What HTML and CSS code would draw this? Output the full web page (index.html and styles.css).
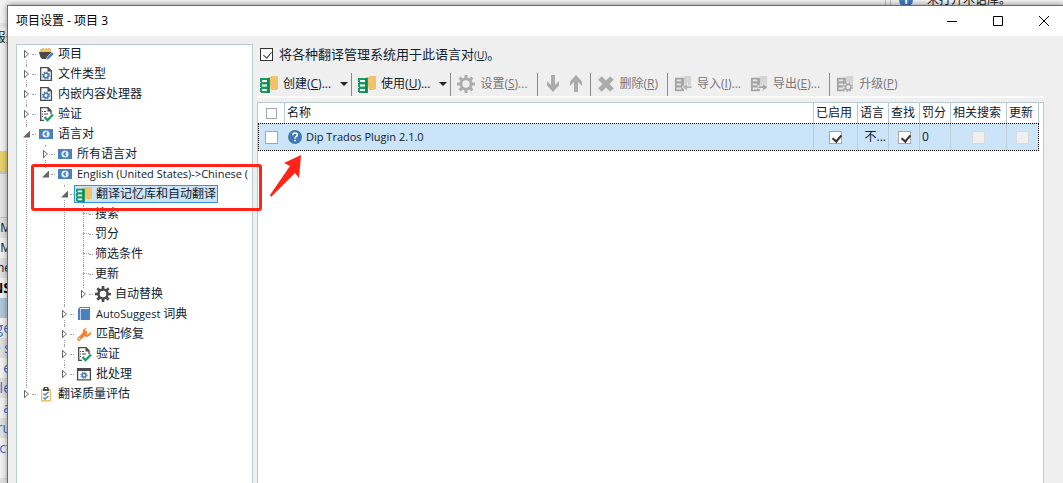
FILE: index.html
```html
<!DOCTYPE html>
<html lang="zh-CN">
<head>
    <meta charset="UTF-8">
    <meta name="viewport" content="width=device-width, initial-scale=1.0">
    <title>项目设置 - 项目 3</title>
    <link rel="stylesheet" href="styles.css">
</head>
<body>
    <svg class="sprite" aria-hidden="true">
        <symbol id="i-project" viewBox="0 0 16 16">
            <path d="M2 6V3h2V2h2v1h1V2h2v1h1V2h2v1h1v3z" fill="#f0c36a"/>
            <path d="M1 6h13l-1 4-3 3H5c-2 0-3-2-4-7z" fill="#4a4a4a"/>
            <path d="M8 14l1-3 5-5 2 2-5 5z" fill="#4a80bd" stroke="#fff" stroke-width=".6"/>
        </symbol>
        <symbol id="i-filetype" viewBox="0 0 16 16">
            <path d="M2.700 1.700h7.500l3.200 3v9.700H2.700z" fill="#fff" stroke="#4a4a4a" stroke-width="1.300"/>
            <path d="M9.500 1.500v4h4z" fill="#4a4a4a"/>
            <circle cx="8" cy="9.500" r="2.300" fill="none" stroke="#4a80bd" stroke-width="1.700"/>
            <circle cx="8" cy="9.500" r="3.500" fill="none" stroke="#4a80bd" stroke-width="1.200" stroke-dasharray="1.400 1.350"/>
        </symbol>
        <symbol id="i-verify" viewBox="0 0 16 16">
            <path d="M6 14.300H2.700V1.700h7.500l2.800 3V8" fill="#fff" stroke="#4a4a4a" stroke-width="1.300"/>
            <path d="M9.500 1.500v4h4z" fill="#4a4a4a"/>
            <path d="M4 5.500h1m1 0h2M4 8h1m1 0h4M4 10.500h1" stroke="#4a4a4a"/>
            <path d="M6.500 11l3 3.200L15 8.500" fill="none" stroke="#159a5f" stroke-width="2.200"/>
        </symbol>
        <symbol id="i-lang" viewBox="0 0 16 16">
            <path d="M1 3h14v10H1z" fill="#4a80bd"/>
            <circle cx="8" cy="8" r="3.600" fill="#e6f0fa"/>
            <path d="M8.800 5.800L6.700 8l2.100 2.200M7 8h2" fill="none" stroke="#4a80bd" stroke-width="1.200"/>
        </symbol>
        <symbol id="i-memory" viewBox="0 0 18 18">
            <path d="M8 2h3V1h7v13h-1v1h-6z" fill="#f0c36a"/>
            <path d="M0 3h10v15H1v-1H0v-4h1v-1H0V8h1V7H0z" fill="#159a5f"/>
            <path d="M2 5h5v2H2zM2 9.500h5v2H2zM2 14h5v2H2z" fill="#fff"/>
            <path d="M8 3v15" stroke="#0d7c4a"/>
        </symbol>
        <symbol id="i-gear" viewBox="0 0 18 18">
            <circle cx="9" cy="9" r="5.100" fill="none" stroke="currentColor" stroke-width="2.800"/>
            <path d="M9 0v4M9 14v4M0 9h4M14 9h4M2.600 2.600l3 3M12.400 12.400l3 3M15.400 2.600l-3 3M5.600 12.400l-3 3" stroke="currentColor" stroke-width="3"/>
        </symbol>
        <symbol id="i-book" viewBox="0 0 16 16">
            <path d="M2 3l2-2h10v13H2z" fill="#4a80bd"/>
            <path d="M4 2.500h9" stroke="#fff"/>
            <path d="M4.500 3v11" stroke="#b9d0e8"/>
        </symbol>
        <symbol id="i-wrench" viewBox="0 0 16 16">
            <path d="M3 13l6.500-6.500" stroke="#f0832e" stroke-width="3.600" stroke-linecap="round"/>
            <path d="M11.500 1.500L9 4v3l2.500 1.500 3.500-3-.5 3.500-3.500 2-3.500-1-1-3 1-4z" fill="#f0832e"/>
            <circle cx="3.500" cy="12.500" r=".8" fill="#fff"/>
        </symbol>
        <symbol id="i-batch" viewBox="0 0 16 16">
            <path d="M1.600 2.600h12.800v11.200H1.600z" fill="#fff" stroke="#4a4a4a" stroke-width="1.300"/>
            <path d="M1 2h14v3H1z" fill="#4a4a4a"/>
            <circle cx="8" cy="9.200" r="1.900" fill="none" stroke="#4a80bd" stroke-width="1.700"/>
            <circle cx="8" cy="9.200" r="3.200" fill="none" stroke="#4a80bd" stroke-dasharray="1.300 1.213"/>
        </symbol>
        <symbol id="i-quality" viewBox="0 0 16 16">
            <path d="M3.700 3.700h8.800v11H3.700z" fill="#fff" stroke="#f0c36a" stroke-width="1.400"/>
            <path d="M5 5V3l1-2h4l1 2v2z" fill="#4a4a4a"/>
            <path d="M7 2.500h2" stroke="#fff"/>
            <path d="M5.500 7.500L7 9l3.500-3M5.500 11.500L7 13l3.500-3" fill="none" stroke="#4a80bd" stroke-width="1.400"/>
        </symbol>
        <symbol id="i-help" viewBox="0 0 14 14">
            <circle cx="7" cy="7" r="7" fill="#4178b5"/>
            <path d="M4.700 5.200c0-3 4.600-2.800 4.600-.2 0 1.700-2.300 1.700-2.300 3.500" fill="none" stroke="#fff" stroke-width="1.600"/>
            <path d="M6.200 9.700h1.700v1.600H6.200z" fill="#fff"/>
        </symbol>
        <symbol id="i-down" viewBox="0 0 14 18">
            <path d="M5 0h4v10l4-4v4.500L7 17 1 10.500V6l4 4z" fill="#ababab"/>
        </symbol>
        <symbol id="i-up" viewBox="0 0 14 18">
            <path d="M5 17h4V7l4 4V6.500L7 0 1 6.500V11l4-4z" fill="#ababab"/>
        </symbol>
        <symbol id="i-delete" viewBox="0 0 18 18">
            <path d="M3 3l12 12M15 3L3 15" stroke="#ababab" stroke-width="5"/>
        </symbol>
        <symbol id="i-stack" viewBox="0 0 20 18">
            <path d="M8 2h3V0h8v12h-8z" fill="#d4d4d4"/>
            <path d="M1 2h10v15H1z" fill="#a4a4a4"/>
            <path d="M3 4h5v2H3zM3 8.500h5v2H3zM3 13h5v2H3z" fill="#e6e6e6"/>
        </symbol>
    </svg>

    <div class="backdrop" aria-hidden="true">
        <div class="backdrop-top"><i class="pane-split"></i><i class="info-dot">i</i><span>未打开术语库。</span></div>
        <div class="backdrop-side">
            <div class="side-line head"></div>
            <div class="side-line menu"><span>服务</span></div>
            <div class="side-line yellow"></div>
            <div class="side-line pane"></div>
            <div class="side-line odd"><span>BM</span></div>
            <div class="side-line"><span>M</span></div>
            <div class="side-line odd"><span>he</span></div>
            <div class="side-line strong"><span>NS</span></div>
            <div class="side-line active"></div>
            <div class="side-line link"><span>ge</span></div>
            <div class="side-line link odd"><span>e s</span></div>
            <div class="side-line link"><span>e</span></div>
            <div class="side-line link odd"><span>le</span></div>
            <div class="side-line link"><span>a</span></div>
            <div class="side-line link odd"><span>ru</span></div>
            <div class="side-line link"><span>ct</span></div>
            <div class="side-line"></div>
            <div class="side-line odd"></div>
        </div>
    </div>

    <div class="dialog" role="dialog" aria-labelledby="dialog-title">
        <header class="titlebar">
            <h1 id="dialog-title">项目设置 - 项目 3</h1>
            <div class="window-buttons">
                <button type="button" aria-label="最小化"><svg viewBox="0 0 10 10"><path d="M0 5.500h10"/></svg></button>
                <button type="button" aria-label="最大化"><svg viewBox="0 0 10 10"><path d="M.5.5h9v9h-9z"/></svg></button>
                <button type="button" aria-label="关闭"><svg viewBox="0 0 10 10"><path d="M0 0l10 10M10 0L0 10"/></svg></button>
            </div>
        </header>

        <div class="content">
            <nav class="tree-panel">
                <ul class="tree">
                    <li><div class="row"><i class="twist"></i><button type="button" class="node"><svg class="icon"><use href="#i-project"/></svg>项目</button></div></li>
                    <li><div class="row"><i class="twist"></i><button type="button" class="node"><svg class="icon"><use href="#i-filetype"/></svg>文件类型</button></div></li>
                    <li><div class="row"><i class="twist"></i><button type="button" class="node"><svg class="icon"><use href="#i-filetype"/></svg>内嵌内容处理器</button></div></li>
                    <li><div class="row"><i class="twist"></i><button type="button" class="node"><svg class="icon"><use href="#i-verify"/></svg>验证</button></div></li>
                    <li>
                        <div class="row"><i class="twist open"></i><button type="button" class="node"><svg class="icon"><use href="#i-lang"/></svg>语言对</button></div>
                        <ul>
                            <li><div class="row"><i class="twist"></i><button type="button" class="node"><svg class="icon"><use href="#i-lang"/></svg>所有语言对</button></div></li>
                            <li>
                                <div class="row"><i class="twist open"></i><button type="button" class="node latin"><svg class="icon"><use href="#i-lang"/></svg>English (United States)-&gt;Chinese (</button></div>
                                <ul>
                                    <li>
                                        <div class="row"><i class="twist open"></i><button type="button" class="node selected"><svg class="icon"><use href="#i-memory"/></svg>翻译记忆库和自动翻译</button></div>
                                        <ul>
                                            <li><div class="row"><i class="twist none"></i><button type="button" class="node">搜索</button></div></li>
                                            <li><div class="row"><i class="twist none"></i><button type="button" class="node">罚分</button></div></li>
                                            <li><div class="row"><i class="twist none"></i><button type="button" class="node">筛选条件</button></div></li>
                                            <li><div class="row"><i class="twist none"></i><button type="button" class="node">更新</button></div></li>
                                            <li><div class="row"><i class="twist"></i><button type="button" class="node"><svg class="icon"><use href="#i-gear"/></svg>自动替换</button></div></li>
                                        </ul>
                                    </li>
                                    <li><div class="row"><i class="twist"></i><button type="button" class="node latin"><svg class="icon"><use href="#i-book"/></svg>AutoSuggest <span>词典</span></button></div></li>
                                    <li><div class="row"><i class="twist"></i><button type="button" class="node"><svg class="icon"><use href="#i-wrench"/></svg>匹配修复</button></div></li>
                                    <li><div class="row"><i class="twist"></i><button type="button" class="node"><svg class="icon"><use href="#i-verify"/></svg>验证</button></div></li>
                                    <li><div class="row"><i class="twist"></i><button type="button" class="node"><svg class="icon"><use href="#i-batch"/></svg>批处理</button></div></li>
                                </ul>
                            </li>
                        </ul>
                    </li>
                    <li><div class="row"><i class="twist"></i><button type="button" class="node"><svg class="icon"><use href="#i-quality"/></svg>翻译质量评估</button></div></li>
                </ul>
            </nav>

            <main class="settings">
                <div class="use-all">
                    <input type="checkbox" id="use-all" checked>
                    <label for="use-all">将各种翻译管理系统用于此语言对<small>(<u>U</u>)</small>。</label>
                </div>

                <div class="toolbar" role="toolbar">
                    <button type="button" class="tool"><svg class="tool-icon"><use href="#i-memory"/></svg><span>创建(<u>C</u>)...</span><i class="caret"></i></button>
                    <i class="separator"></i>
                    <button type="button" class="tool"><svg class="tool-icon"><use href="#i-memory"/></svg><span>使用(<u>U</u>)...</span><i class="caret"></i></button>
                    <i class="separator"></i>
                    <button type="button" class="tool" disabled><svg class="tool-icon"><use href="#i-gear"/></svg><span>设置(<u>S</u>)...</span></button>
                    <i class="separator"></i>
                    <button type="button" class="tool arrow" aria-label="下移" disabled><svg class="tool-icon"><use href="#i-down"/></svg></button>
                    <button type="button" class="tool arrow" aria-label="上移" disabled><svg class="tool-icon"><use href="#i-up"/></svg></button>
                    <i class="separator"></i>
                    <button type="button" class="tool" disabled><svg class="tool-icon"><use href="#i-delete"/></svg><span>删除(<u>R</u>)</span></button>
                    <i class="separator"></i>
                    <button type="button" class="tool" disabled>
                        <svg class="tool-icon" viewBox="0 0 20 18"><use href="#i-stack" width="20" height="18"/><path d="M20 11v3h-5v3l-6-4.500L15 8v3z" fill="#b4b4b4" stroke="#efefef"/></svg><span>导入(<u>I</u>)...</span>
                    </button>
                    <button type="button" class="tool" disabled>
                        <svg class="tool-icon" viewBox="0 0 20 18"><use href="#i-stack" width="20" height="18"/><path d="M9 11v3h5v3l6-4.500L14 8v3z" fill="#a4a4a4" stroke="#efefef"/></svg><span>导出(<u>E</u>)...</span>
                    </button>
                    <i class="separator"></i>
                    <button type="button" class="tool" disabled>
                        <svg class="tool-icon" viewBox="0 0 20 18"><use href="#i-stack" width="20" height="18"/><circle cx="13.500" cy="12.500" r="5.500" fill="#efefef"/><circle cx="13.500" cy="12.500" r="3" fill="none" stroke="#ababab" stroke-width="2"/><circle cx="13.500" cy="12.500" r="4.600" fill="none" stroke="#ababab" stroke-width="1.600" stroke-dasharray="1.800 1.813"/></svg><span>升级(<u>P</u>)</span>
                    </button>
                </div>

                <div class="grid">
                    <table>
                        <colgroup>
                            <col class="c-check"><col><col class="c-enabled"><col class="c-small"><col class="c-small"><col class="c-small"><col class="c-related"><col class="c-update">
                        </colgroup>
                        <thead>
                            <tr>
                                <th class="center"><input type="checkbox" class="small" aria-label="全选"></th>
                                <th>名称</th>
                                <th>已启用</th>
                                <th>语言</th>
                                <th>查找</th>
                                <th>罚分</th>
                                <th>相关搜索</th>
                                <th>更新</th>
                            </tr>
                        </thead>
                        <tbody>
                            <tr>
                                <td class="center"><input type="checkbox" aria-label="选择"></td>
                                <td><div class="provider"><svg><use href="#i-help"/></svg>Dip Trados Plugin 2.1.0</div></td>
                                <td class="center"><input type="checkbox" aria-label="已启用" checked></td>
                                <td class="right">不...</td>
                                <td class="center"><input type="checkbox" aria-label="查找" checked></td>
                                <td>0</td>
                                <td class="center"><input type="checkbox" aria-label="相关搜索" disabled></td>
                                <td class="center"><input type="checkbox" aria-label="更新" disabled></td>
                            </tr>
                        </tbody>
                    </table>
                </div>
            </main>
        </div>
    </div>

    <div class="mark-box"></div>
    <svg class="mark-arrow" viewBox="0 0 34 44"><path d="M32 1L15 9l6 3L1 41l1 2 24-24 4 5z" fill="#ff2417"/></svg>
</body>
</html>
```
FILE: styles.css
```css
* {
    margin: 0;
    padding: 0;
    box-sizing: border-box;
}

body {
    display: flex;
    min-height: 100vh;
    overflow: hidden;
    position: relative;
    background: #ededed;
    color: #10202e;
    font-family: "Open Sans", "Noto Sans CJK SC", sans-serif;
    font-size: 12px;
    line-height: 16px;
}

button {
    border: 0;
    background: none;
    color: inherit;
    font: inherit;
    white-space: nowrap;
}

i {
    font-style: normal;
}

ul {
    list-style: none;
}

.sprite {
    position: absolute;
    width: 0;
    height: 0;
}

/* main window behind the dialog */
.backdrop {
    position: absolute;
    inset: 0;
    overflow: hidden;
    background: linear-gradient(#f4f4f4, #e6e6e6 5px);
}

.backdrop-top {
    position: absolute;
    top: -8px;
    right: 0;
    width: 178px;
    display: flex;
    align-items: center;
    gap: 14px;
    color: #111;
}

.pane-split {
    width: 6px;
    height: 16px;
    border: solid #bbb;
    border-width: 0 1px;
}

.info-dot {
    width: 14px;
    height: 14px;
    margin-left: -6px;
    border-radius: 50%;
    background: #4178b5;
    color: #fff;
    font-weight: bold;
    line-height: 14px;
    text-align: center;
}

.backdrop-side {
    width: 11px;
}

.side-line {
    display: flex;
    justify-content: flex-end;
    align-items: center;
    height: 20px;
    overflow: hidden;
    background: #f1f1f1;
    white-space: nowrap;
}

.side-line.head {
    height: 27px;
    border-bottom: 4px solid #e4e4e4;
}

.side-line.menu {
    height: 124px;
    align-items: flex-start;
    justify-content: center;
    padding-top: 3px;
    color: #111;
}

.side-line.yellow {
    background: #e8d06c;
}

.side-line.pane {
    height: 47px;
    border-top: 3px solid #c4c8cc;
    border-bottom: 1px solid #b8c4cc;
    background: #e4e4e4;
}

.side-line.odd {
    background: #dfdfdf;
}

.side-line.strong {
    color: #000;
    font-size: 14px;
    font-weight: bold;
}

.side-line.active {
    background: #aec6d8;
}

.side-line.link {
    color: #4169c0;
    font-size: 14px;
}

.dialog {
    position: relative;
    display: flex;
    flex: 1;
    flex-direction: column;
    min-width: 0;
    margin: 5px 0 0 7px;
    border: solid #6b6b6b;
    border-width: 1px 0 0 1px;
    background: #efefef;
    box-shadow: 0 0 6px rgba(0, 0, 0, 0.4);
}

.titlebar {
    display: flex;
    align-items: center;
    justify-content: space-between;
    height: 30px;
    padding-left: 8px;
    background: #fff;
    color: #000;
}

.titlebar h1 {
    font-size: 12px;
    font-weight: normal;
}

.window-buttons {
    display: flex;
    margin-right: -4px;
}

.window-buttons button {
    display: flex;
    align-items: center;
    justify-content: center;
    width: 46px;
    height: 28px;
}

.window-buttons svg {
    width: 10px;
    height: 10px;
    fill: none;
    stroke: #000;
}

.content {
    display: flex;
    flex: 1;
    gap: 4px;
    min-height: 0;
    padding: 8px 19px 0 8px;
}

.tree-panel {
    flex: 0 0 237px;
    overflow: hidden;
    border: 1px solid #b8cbd3;
    border-bottom: 0;
    background: #fff;
}

.tree {
    padding-left: 4px;
}

.tree ul {
    padding-left: 19px;
}

.tree li {
    position: relative;
}

/* dotted guide that joins siblings */
.tree li::before {
    content: "";
    position: absolute;
    top: 0;
    bottom: 0;
    left: 5px;
    border-left: 1px dotted #a0a0a0;
}

.tree li:last-child::before {
    bottom: auto;
    height: 9px;
}

.tree > li:first-child::before {
    top: 10px;
}

.row {
    display: flex;
    align-items: center;
    height: 20px;
    padding-bottom: 2px;
}

.row::after {
    content: "";
    order: 1;
    width: 4px;
    border-top: 1px dotted #a0a0a0;
}

.twist {
    position: relative;
    display: flex;
    align-items: center;
    justify-content: center;
    width: 11px;
    height: 12px;
    background: #fff;
}

.twist::before {
    content: "";
    width: 5px;
    height: 9px;
    background: #666;
    clip-path: polygon(0 0, 100% 50%, 0 100%, 0 0, 1px 2px, 1px 7px, 4px 50%, 1px 2px);
}

.twist.open::before {
    width: 7px;
    height: 7px;
    clip-path: polygon(100% 0, 100% 100%, 0 100%);
}

/* leaf rows: the line runs straight from the guide */
.twist.none {
    justify-content: flex-end;
    background: none;
}

.twist.none::before {
    width: 6px;
    height: 1px;
    border-top: 1px dotted #a0a0a0;
    background: none;
    clip-path: none;
}

.node {
    display: flex;
    order: 2;
    align-items: center;
    gap: 4px;
    height: 18px;
    padding: 0 1px;
    border: 1px solid transparent;
}

.node.latin {
    font-size: 11px;
}

.node.latin span {
    margin-left: -1px;
    font-size: 12px;
}

.node.selected {
    border-color: #3592dc;
    background: #cce4f7;
}

.icon {
    flex: none;
    width: 16px;
    height: 16px;
    color: #4a4a4a;
}

.settings {
    display: flex;
    flex: 1;
    flex-direction: column;
    min-width: 0;
}

input[type="checkbox"] {
    appearance: none;
    position: relative;
    width: 13px;
    height: 13px;
    border: 1px solid #a6a6a6;
    background: #fff;
}

input[type="checkbox"].small {
    width: 11px;
    height: 11px;
}

input[type="checkbox"]:disabled {
    border-color: #d9d9d9;
    background: #efefef;
}

input[type="checkbox"]:checked::after {
    content: "";
    position: absolute;
    top: 1px;
    left: 4px;
    width: 4px;
    height: 7px;
    border: solid #333;
    border-width: 0 2px 2px 0;
    transform: rotate(40deg);
}

.use-all {
    display: flex;
    align-items: center;
    gap: 6px;
    height: 20px;
    padding-left: 3px;
    font-size: 13px;
}

.use-all input[type="checkbox"] {
    border-color: #333;
}

.use-all input[type="checkbox"]:checked::after {
    border-width: 0 1px 1px 0;
}

.use-all small {
    font-size: 10px;
}

.toolbar {
    display: flex;
    align-items: center;
    height: 34px;
    padding: 8px 0 0 3px;
    border-bottom: 2px solid #fafafa;
}

.tool {
    display: flex;
    align-items: center;
    gap: 5px;
    padding-right: 9px;
}

.tool:disabled {
    color: #777;
}

.tool-icon {
    flex: none;
    width: 18px;
    height: 18px;
}

.tool:disabled .tool-icon {
    color: #ababab;
}

.tool.arrow {
    padding-right: 5px;
}

.tool:has(.caret) {
    padding-right: 3px;
}

.caret {
    margin-left: 4px;
    border: 4px solid transparent;
    border-top-color: #222;
    border-bottom: 0;
}

.separator {
    width: 1px;
    height: 23px;
    margin-right: 6px;
    background: #8a8a8a;
}

.grid {
    flex: 1;
    margin-top: 4px;
    padding-right: 4px;
    border: 1px solid #b8cbd3;
    border-bottom: 0;
    background: #fff;
}

table {
    width: 100%;
    border-collapse: separate;
    border-spacing: 0;
    table-layout: fixed;
}

.c-check {
    width: 27px;
}

.c-enabled {
    width: 44px;
}

.c-small {
    width: 31px;
}

.c-related {
    width: 56px;
}

.c-update {
    width: 32px;
}

th,
td {
    height: 20px;
    padding: 0 2px;
    overflow: hidden;
    border-right: 1px solid #b8cbd3;
    font-weight: normal;
    text-align: left;
    white-space: nowrap;
}

td {
    height: 28px;
}

td:nth-child(1),
td:last-child {
    border-right-color: transparent;
}

tbody tr {
    outline: 1px dotted #000;
    outline-offset: -1px;
    background: #cce4f7;
}

.center {
    text-align: center;
}

.center input {
    display: block;
    margin: 0 auto;
}

.right {
    text-align: right;
}

.provider {
    display: flex;
    align-items: center;
    gap: 4px;
    padding-left: 1px;
    font-size: 11px;
}

.provider svg {
    width: 14px;
    height: 14px;
}

/* red callout over the language pair */
.mark-box {
    position: absolute;
    top: 164px;
    left: 31px;
    width: 231px;
    height: 47px;
    border: 3px solid #ff2417;
    border-radius: 3px;
}

.mark-arrow {
    position: absolute;
    top: 154px;
    left: 269px;
    width: 34px;
    height: 44px;
}
```
